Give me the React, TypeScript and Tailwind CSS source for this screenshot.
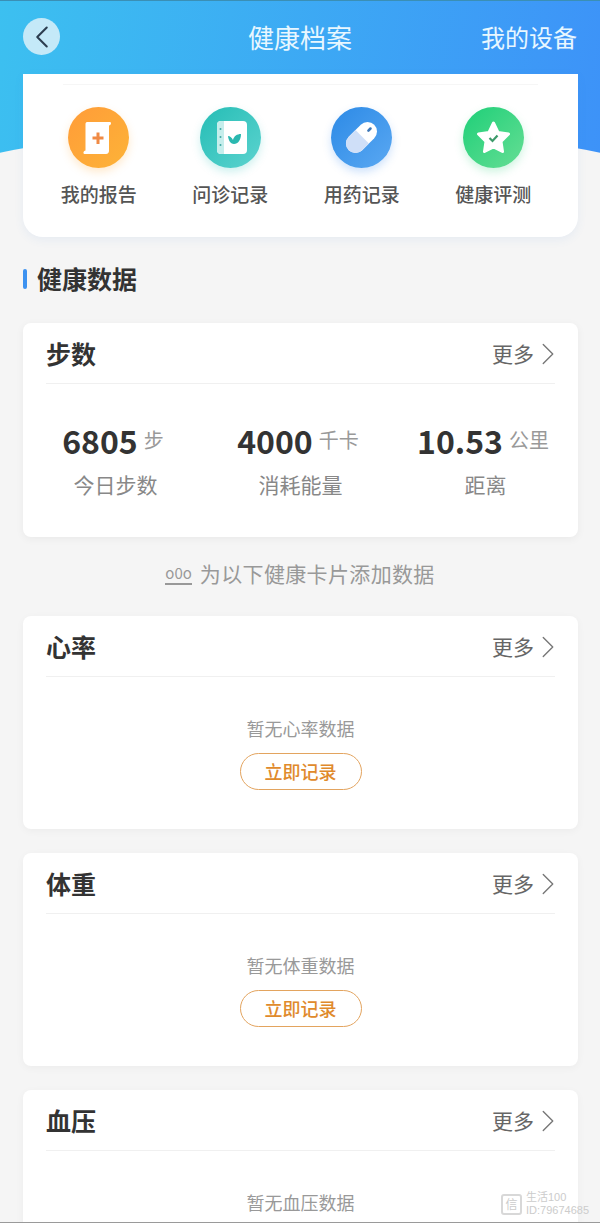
import { ChevronLeft, ChevronRight } from 'lucide-react';
import type { ReactNode } from 'react';

const FONT = 'font-["Noto_Sans_CJK_SC","Noto_Sans",sans-serif]';

function ReportIcon() {
  return (
    <svg viewBox="0 0 61 61" className="h-full w-full">
      <defs>
        <linearGradient id="report" x1="0" y1="0" x2="1" y2="1">
          <stop offset="0" stopColor="#ff9c38" />
          <stop offset="1" stopColor="#fdb338" />
        </linearGradient>
      </defs>
      <circle cx="30.5" cy="30.5" r="30.5" fill="url(#report)" />
      <path
        d="M19 15h23c1.5 0 1.5 3-1 3.5V44c0 1.5-1 3-3 3H16.500c-1.500 0-1.500-3 1-3.500V17c0-1 .5-2 1.500-2z"
        fill="#fff"
      />
      <path d="M28.500 25.500h3v4h4v3h-4v4.500h-3V32.500h-4v-3h4z" fill="#f08a45" />
    </svg>
  );
}

function NotebookIcon() {
  return (
    <svg viewBox="0 0 61 61" className="h-full w-full">
      <defs>
        <linearGradient id="notebook" x1="0" y1="0" x2="1" y2="1">
          <stop offset="0" stopColor="#25bdb5" />
          <stop offset="1" stopColor="#5cd3cf" />
        </linearGradient>
      </defs>
      <circle cx="30.5" cy="30.5" r="30.5" fill="url(#notebook)" />
      <rect x="17" y="14" width="30" height="33" rx="4" fill="#fff" />
      <path d="M17 18a4 4 0 0 1 4-4h3v33h-3a4 4 0 0 1-4-4z" fill="#c6eeec" />
      <circle cx="20.500" cy="22" r="1" fill="#3fa8a4" />
      <circle cx="20.500" cy="30" r="1" fill="#3fa8a4" />
      <circle cx="20.500" cy="38" r="1" fill="#3fa8a4" />
      <path d="M28 29c2 0 4 2 5 4 1-4 4-6 8-6 0 6-3 10-7 10-3 0-5.500-3-6-8z" fill="#2ab8b0" />
    </svg>
  );
}

function PillIcon() {
  return (
    <svg viewBox="0 0 61 61" className="h-full w-full">
      <defs>
        <linearGradient id="pill" x1="0" y1="0" x2="1" y2="1">
          <stop offset="0" stopColor="#2c8ae6" />
          <stop offset="1" stopColor="#5aa8f2" />
        </linearGradient>
      </defs>
      <circle cx="30.5" cy="30.5" r="30.5" fill="url(#pill)" />
      <g transform="rotate(45 30.5 30.5)">
        <rect x="21" y="12.500" width="19" height="36" rx="9.500" fill="#fff" />
        <path d="M21 29.500h19V39a9.500 9.500 0 0 1-19 0z" fill="#cfdff8" />
        <rect x="29.200" y="16.500" width="2.600" height="5.500" rx="1.300" fill="#3f78b8" />
      </g>
    </svg>
  );
}

function StarIcon() {
  return (
    <svg viewBox="0 0 61 61" className="h-full w-full">
      <defs>
        <linearGradient id="star" x1="0" y1="0" x2="1" y2="1">
          <stop offset="0" stopColor="#1ecf78" />
          <stop offset="1" stopColor="#66de94" />
        </linearGradient>
      </defs>
      <circle cx="30.5" cy="30.5" r="30.5" fill="url(#star)" />
      <path
        d="M30.500 16l4.500 9.500 10.500 1.500-7.500 7.500 1.500 10-9-4.500-9 4.500 1.500-10-7.500-7.500 10.500-1.500z"
        fill="#fff"
        stroke="#fff"
        strokeWidth="3"
        strokeLinejoin="round"
      />
      <path d="M26.500 31l3 3 5-5.500" fill="none" stroke="#3c9a6a" strokeWidth="2.200" />
    </svg>
  );
}

function Shortcut({ icon, label, shadow }: { icon: ReactNode; label: string; shadow: string }) {
  return (
    <div className="flex w-[131.5px] flex-col items-center">
      <div className={`h-[61px] w-[61px] rounded-full ${shadow}`}>{icon}</div>
      <div className="mt-[12px] text-[19px] leading-[28px] font-medium text-[#555]">{label}</div>
    </div>
  );
}

function CardHeader({ title }: { title: string }) {
  return (
    <div className="mx-[23px] flex h-[61px] items-center justify-between border-b border-[#f0f0f0] pt-[2px]">
      <span className="text-[25px] font-bold text-[#333]">{title}</span>
      <span className="flex items-center text-[21px] text-[#666]">
        更多
        <ChevronRight size={38} strokeWidth={0.85} className="-mr-[12px] -ml-[5px] shrink-0 text-[#777]" />
      </span>
    </div>
  );
}

function Stat({ value, unit, label }: { value: string; unit: string; label: string }) {
  return (
    <div className="flex flex-1 flex-col items-center">
      <div className="flex h-[36px] items-center pr-[5px]">
        <span className="text-[32px] leading-[36px] font-bold text-[#333]">{value}</span>
        <span className="ml-[6px] text-[20px] leading-[36px] text-[#999]">{unit}</span>
      </div>
      <div className="mt-[11px] text-[21px] leading-[30px] text-[#888]">{label}</div>
    </div>
  );
}

function EmptyCard({ title, what, last }: { title: string; what: string; last?: boolean }) {
  return (
    <section
      className={`ml-[23px] w-[555px] rounded-[8px] bg-white shadow-[0_2px_8px_rgba(0,0,0,0.04)] ${last ? 'h-[160px]' : 'h-[213px]'}`}
    >
      <CardHeader title={title} />
      <div className="flex flex-col items-center pt-[37px]">
        <div className="text-[18px] leading-[28px] text-[#999]">暂无{what}数据</div>
        {!last && (
          <button className="mt-[11px] h-[37px] w-[122px] rounded-full border-[1.5px] border-[#e3a45f] text-[18px] font-medium text-[#e08a2c]">
            立即记录
          </button>
        )}
      </div>
    </section>
  );
}

export default function App() {
  return (
    <div className={`relative h-[1223px] w-[600px] overflow-hidden bg-[#f5f5f5] ${FONT}`}>
      {/* blue header with the curved bottom edge */}
      <div className="absolute inset-x-0 top-0 h-[170px] overflow-hidden border-t border-[#3a8fb5] bg-linear-[100deg] from-[#3cc0f0] to-[#3d92f8]">
        <div className="absolute top-[125px] left-[-150px] h-[210px] w-[900px] rounded-[50%] bg-[#f5f5f5]" />
      </div>

      <div className="relative">
        <header className="flex h-[74px] items-center justify-between pr-[23px] pb-[1px] pl-[23px]">
          <div className="flex h-[37px] w-[37px] items-center justify-center rounded-full bg-[#c4e9f8]">
            <ChevronLeft size={38} strokeWidth={1.3} className="shrink-0 text-[#2c3e50]" />
          </div>
          <h1 className="absolute left-0 w-full text-center text-[26px] font-normal text-[#e8f7ff]">健康档案</h1>
          <span className="text-[24px] text-[#e8f7ff]">我的设备</span>
        </header>

        <section className="ml-[23px] h-[163px] w-[555px] rounded-b-[20px] bg-white pt-[10px] shadow-[0_3px_10px_rgba(70,130,220,0.08)]">
          <div className="mx-[40px] border-t border-[#f6f6f6]" />
          <div className="mt-[22px] flex pl-[10px]">
            <Shortcut icon={<ReportIcon />} label="我的报告" shadow="shadow-[0_4px_8px_rgba(255,170,60,0.25)]" />
            <Shortcut icon={<NotebookIcon />} label="问诊记录" shadow="shadow-[0_4px_8px_rgba(60,200,190,0.25)]" />
            <Shortcut icon={<PillIcon />} label="用药记录" shadow="shadow-[0_4px_8px_rgba(60,140,240,0.25)]" />
            <Shortcut icon={<StarIcon />} label="健康评测" shadow="shadow-[0_4px_8px_rgba(60,210,130,0.25)]" />
          </div>
        </section>

        <div className="ml-[23px] mt-[25px] flex h-[34px] items-center">
          <span className="h-[20px] w-[4px] rounded-[2px] bg-[#3d92f0]" />
          <h2 className="ml-[10px] text-[25px] font-bold text-[#333]">健康数据</h2>
        </div>

        <section className="ml-[23px] mt-[27px] h-[214px] w-[555px] rounded-[8px] bg-white shadow-[0_2px_8px_rgba(0,0,0,0.05)]">
          <CardHeader title="步数" />
          <div className="flex pt-[38px]">
            <Stat value="6805" unit="步" label="今日步数" />
            <Stat value="4000" unit="千卡" label="消耗能量" />
            <Stat value="10.53" unit="公里" label="距离" />
          </div>
        </section>

        <div className="mt-[18px] flex h-[38px] items-center justify-center text-[21px] tracking-[0.35px] text-[#999]">
          <span className="mr-[8px] border-b-2 border-[#999] text-[15px] leading-[20px] tracking-normal">o0o</span>
          为以下健康卡片添加数据
        </div>

        <div className="mt-[23px] flex flex-col gap-[24px]">
          <EmptyCard title="心率" what="心率" />
          <EmptyCard title="体重" what="体重" />
          <EmptyCard title="血压" what="血压" last />
        </div>
      </div>

      {/* watermark over the last card */}
      <div className="absolute top-[1191px] left-[501px] flex items-center text-[#ccc]">
        <div className="flex h-[21px] w-[21px] items-center justify-center rounded-[3px] border-2 border-[#d8d8d8] text-[12px] leading-none">
          信
        </div>
        <div className='ml-[4px] font-["Liberation_Sans","Noto_Sans_CJK_SC",sans-serif] text-[11px] leading-[13px]'>
          <div>生活100</div>
          <div>ID:79674685</div>
        </div>
      </div>
      <div className="absolute inset-x-0 bottom-0 h-px bg-[#9a9a9a]" />
    </div>
  );
}
